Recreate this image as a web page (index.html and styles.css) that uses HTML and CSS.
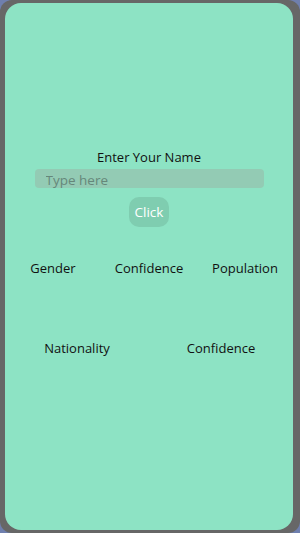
FILE: index.html
```html
<!DOCTYPE html>
<html lang="en">
<head>
    <meta charset="UTF-8">
    <meta name="viewport" content="width=device-width, initial-scale=1.0">
    <title>Name Guesser</title>
    <link rel="stylesheet" href="styles.css">
</head>
<body>
    <div class="frame">
        <div class="screen">
            <div class="form">
                <label for="name-input">Enter Your Name</label>
                <input type="text" id="name-input" placeholder="Type here" autocomplete="off">
                <button id="click-button">Click</button>
            </div>

            <div class="row row-three">
                <div class="cell">Gender</div>
                <div class="cell">Confidence</div>
                <div class="cell">Population</div>
            </div>

            <div class="row row-two">
                <div class="cell">Nationality</div>
                <div class="cell">Confidence</div>
            </div>
        </div>
    </div>
</body>
</html>
```

FILE: styles.css
```css
:root {
    --bg-color: #6f7fae;
    --frame-color: #676767;
    --screen-color: #8de3c4;
    --input-color: #93cbb4;
    --button-color: #7fcdb0;
    --text-color: #111;
}

body {
    margin: 0;
    padding: 0;
    width: 300px;
    height: 533px;
    background-color: var(--bg-color);
    font-family: 'Open Sans', 'Noto Sans', sans-serif;
    color: var(--text-color);
    overflow: hidden;
}

.frame {
    height: 533px;
    box-sizing: border-box;
    padding: 3px 7px 3px 5px;
    background-color: var(--frame-color);
    border-radius: 12px;
}

.screen {
    height: 100%;
    background-color: var(--screen-color);
    border-radius: 16px;
    display: flex;
    flex-direction: column;
}

.form {
    display: flex;
    flex-direction: column;
    align-items: center;
    padding-top: 145px;
}

.form label {
    font-size: 13px;
    line-height: 18px;
}

#name-input {
    width: 229px;
    height: 19px;
    box-sizing: border-box;
    margin-top: 3px;
    padding: 3px 11px 0;
    border: none;
    border-radius: 4px;
    background-color: var(--input-color);
    font-family: inherit;
    font-size: 13.5px;
    outline: none;
}

#name-input::placeholder {
    color: #66877a;
}

#click-button {
    width: 40px;
    height: 30px;
    margin-top: 9px;
    padding: 0;
    border: none;
    border-radius: 10px;
    background-color: var(--button-color);
    color: #fff;
    font-family: inherit;
    font-size: 13.5px;
    cursor: pointer;
}

.row {
    display: grid;
    font-size: 13px;
    line-height: 18px;
    text-align: center;
}

.row-three {
    grid-template-columns: repeat(3, 1fr);
    margin-top: 32px;
}

.row-two {
    grid-template-columns: repeat(2, 1fr);
    margin-top: 62px;
}
```
